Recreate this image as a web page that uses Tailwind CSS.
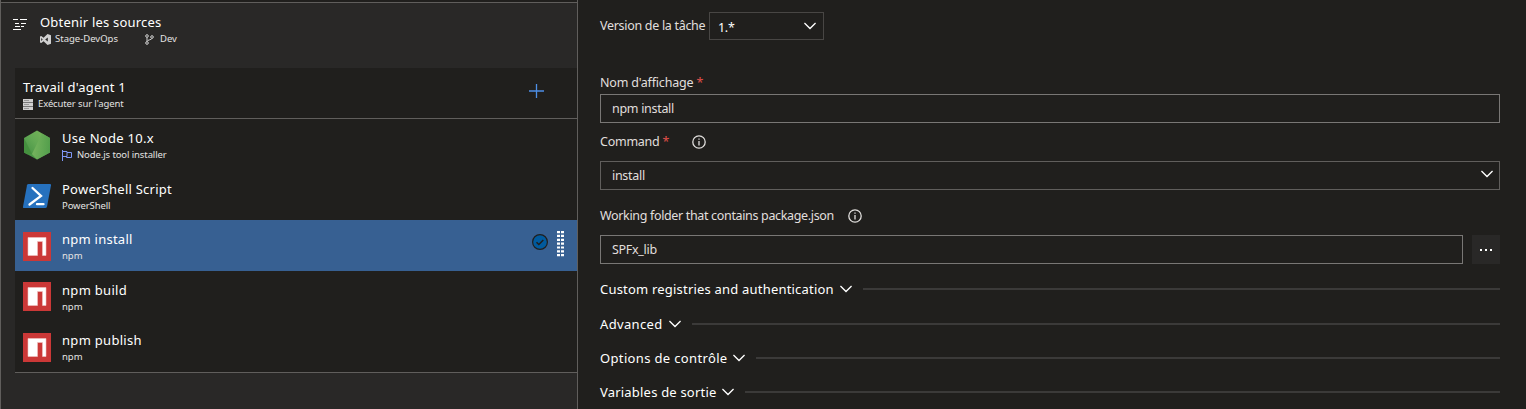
<!DOCTYPE html>
<html lang="fr">
<head>
<meta charset="utf-8">
<title>Pipeline</title>
<script src="https://cdn.jsdelivr.net/npm/@tailwindcss/browser@4"></script>
</head>
<body class="w-[1526px] h-[409px] overflow-hidden bg-[#201f1d] text-white font-['Noto_Sans','Open_Sans',sans-serif] text-[13px] leading-[18px] whitespace-nowrap">
<svg class="hidden">
  <symbol id="chev" viewBox="0 0 12 8"><path d="M.4 1 6 6.600 11.600 1" fill="none" stroke="currentColor" stroke-width="1.400"/></symbol>
  <symbol id="info" viewBox="0 0 14 14"><circle cx="7" cy="7" r="6.2" fill="none" stroke="currentColor" stroke-width="1.3"/><path d="M7 6v4.5M7 3.5v1.3" stroke="currentColor" stroke-width="1.3"/></symbol>
  <symbol id="npm" viewBox="0 0 28 29"><path fill="#cb3837" d="M0 0h28v29H0z"/><path fill="#fff" stroke="#f0c4c4" stroke-width=".6" d="M5 5.500h18v18h-3.500V9.500h-5v14H5z"/></symbol>
</svg>
<div class="flex h-full">
  <aside class="w-[578px] shrink-0 flex flex-col border-x border-[#605e5c] bg-[#292827]">
    <div class="h-[3px] shrink-0 bg-[#201f1d] border-b border-[#605e5c]"></div>
    <div class="h-[65px] shrink-0 flex pl-3 pt-[10px]">
      <svg class="w-[14px] h-[12px] mt-[6px] mr-[13px]" viewBox="0 0 14 12" stroke="#fff" stroke-width="1" fill="none"><path d="M0 .5h5M7 .5h7M2 4.500h4M8 4.500h5M2 7.500h5M8 7.500h3M0 10.500h8"/></svg>
      <div>
        <div class="tracking-[.2px]">Obtenir les sources</div>
        <div class="flex items-center h-[16px] text-[9.5px] leading-[16px] text-[#e4e3e2]">
          <svg class="w-[11px] h-[11px] mr-1" viewBox="0 0 11 11"><path fill="#d0d0d0" fill-rule="evenodd" d="M7.500 0 11 1.200v8.600L7.500 11 3.600 7.200 1.200 9 0 8.400V2.600L1.200 2l2.400 1.800zM7.800 3.400 5.200 5.500l2.600 2.100zM1.200 4v3l1.500-1.500z"/></svg>
          <span class="w-[90px]">Stage-DevOps</span>
          <svg class="w-[9px] h-[11px] mr-[6px]" viewBox="0 0 9 11" fill="none" stroke="#d0d0d0"><circle cx="2" cy="2" r="1.300"/><circle cx="2" cy="9" r="1.300"/><circle cx="7" cy="3" r="1.300"/><path d="M2 3.300v4.400M7 4.300C7 6 2.500 5.500 2 7.500"/></svg>
          <span>Dev</span>
        </div>
      </div>
    </div>
    <div class="ml-[14px] bg-[#201f1d] border-b border-[#605e5c] h-[305px] shrink-0">
      <div class="flex h-[51px] border-b border-[#605e5c] pl-2 pt-[10px]">
        <div class="w-[506px]">
          <div class="tracking-[.2px]">Travail d'agent 1</div>
          <div class="flex items-center h-[16px] text-[9.5px] leading-[16px] text-[#e4e3e2]">
            <svg class="w-[10px] h-[11px] mr-[5px]" viewBox="0 0 10 11"><path fill="#d0d0d0" d="M0 0h10v11H0z"/><path stroke="#777" d="M0 3.500h10M0 7.500h10"/><path stroke="#999" d="M1 1.500h5M1 5.500h5M1 9.500h5"/></svg>
            <span class="tracking-[-.12px]">Exécuter sur l'agent</span>
          </div>
        </div>
        <svg class="w-[15px] h-[15px] mt-[6px]" viewBox="0 0 15 15"><path d="M7.500 0v14M0 7h15" stroke="#4d8fe6" stroke-width="1.300"/></svg>
      </div>
      <div class="flex h-[51px] pl-2 pt-[10px]">
        <svg class="w-7 h-[30px] mt-[1px] mr-[11px]" viewBox="0 0 28 30"><defs><linearGradient id="g" x1="0" y1="1" x2="1" y2="0"><stop offset="0" stop-color="#3b8a3e"/><stop offset=".5" stop-color="#62a854"/><stop offset="1" stop-color="#7cb85b"/></linearGradient><linearGradient id="h" x1="0" y1="0" x2="1" y2="0"><stop offset="0" stop-color="#7fba62"/><stop offset="1" stop-color="#4c9a49"/></linearGradient></defs><path fill="url(#g)" d="M14 .5 27 8v14.500L14 29.500 1 22.500V8z"/><path fill="#45903f" d="m1 8 8 16-5 .2-3-1.700z"/><path fill="url(#h)" d="M19 3.500 27 8v14.500L14 29.500 9 24z" opacity=".8"/></svg>
        <div>
          <div class="tracking-[.3px]">Use Node 10.x</div>
          <div class="flex items-center h-[16px] text-[9.5px] leading-[16px] text-[#e4e3e2]">
            <svg class="w-[10px] h-[11px] mr-[5px]" viewBox="0 0 10 11" fill="none" stroke="#7f97f5"><path d="M.5 0v11M.5 1.500H5v5H.5M5 2.500h4.500v5H4.500V6"/></svg>
            <span class="tracking-[-.1px]">Node.js tool installer</span>
          </div>
        </div>
      </div>
      <div class="flex h-[50px] pl-2 pt-[10px]">
        <svg class="w-7 h-6 mt-[4px] mr-[11px]" viewBox="0 0 28 24"><path fill="#2671be" d="M5.500 0H27q1.200 0 1 1.200L24 22.500q-.3 1.500-1.800 1.500H1q-1.200 0-1-1.200L4 1.300Q4.300 0 5.500 0z"/><path d="m9.500 4 8.500 8L6.500 20.500M14 20.200h6.500" fill="none" stroke="#fff" stroke-width="2.300" stroke-linecap="round"/></svg>
        <div>
          <div class="tracking-[.25px]">PowerShell Script</div>
          <div class="h-[16px] text-[9.5px] leading-[16px] text-[#e4e3e2] tracking-[-.1px]">PowerShell</div>
        </div>
      </div>
      <div class="flex h-[51px] pl-2 pt-[10px] bg-[#376092]">
        <svg class="w-7 h-[29px] mt-[2px] mr-[11px]"><use href="#npm"/></svg>
        <div class="w-[470px]">
          <div class="tracking-[.25px]">npm install</div>
          <div class="h-[16px] text-[9.5px] leading-[16px] text-[#e4e3e2]">npm</div>
        </div>
        <svg class="w-4 h-4 mt-[4px] mr-[9px]" viewBox="0 0 16 16"><circle cx="8" cy="8" r="7.400" fill="#005a9e" stroke="#201f1e" stroke-width="1.200"/><path d="m4.500 8.200 2.300 2.300 4.500-4.600" fill="none" stroke="#201f1e" stroke-width="1.500"/></svg>
        <svg class="w-[7px] h-[27px] mt-[1px]" viewBox="0 0 7 27" fill="none" stroke="#fff" stroke-width="3"><path d="M1.500 0v27M5.500 0v27" stroke-dasharray="2.200 1.650"/></svg>
      </div>
      <div class="flex h-[51px] pl-2 pt-[10px]">
        <svg class="w-7 h-[29px] mt-[1px] mr-[11px]"><use href="#npm"/></svg>
        <div>
          <div class="tracking-[.3px]">npm build</div>
          <div class="h-[16px] text-[9.5px] leading-[16px] text-[#e4e3e2]">npm</div>
        </div>
      </div>
      <div class="flex h-[50px] pl-2 pt-[9px]">
        <svg class="w-7 h-[29px] mt-[2px] mr-[11px]"><use href="#npm"/></svg>
        <div>
          <div class="tracking-[.3px]">npm publish</div>
          <div class="h-[16px] text-[9.5px] leading-[16px] text-[#e4e3e2]">npm</div>
        </div>
      </div>
    </div>
  </aside>
  <main class="w-[922px] ml-[22px] pr-[22px] pt-3 text-[12.5px] tracking-[-.3px] text-[#e1dfdd]">
    <div class="flex h-7">
      <span class="w-[109px] mt-[5px]">Version de la tâche</span>
      <div class="w-[115px] border border-[#484644] flex justify-between items-center pl-2 pr-[7px] text-white"><span class="mt-[3px]">1.*</span><svg class="w-3 h-2"><use href="#chev"/></svg></div>
    </div>
    <div class="mt-[34px] h-[18px] tracking-[-.2px]">Nom d'affichage <span class="text-[#e0504a]">*</span></div>
    <div class="mt-[2px] h-[29px] border border-[#797775] flex items-center pl-[11px] pt-px">npm install</div>
    <div class="mt-[10px] h-[18px] flex items-center"><span class="w-[92px] tracking-[-.25px]">Command <span class="text-[#e0504a]">*</span></span><svg class="w-[14px] h-[14px]"><use href="#info"/></svg></div>
    <div class="mt-[10px] h-[29px] border border-[#605e5c] flex items-center justify-between pl-[11px] pr-[6px] pt-px">install<svg class="w-3 h-2 mb-1 text-white"><use href="#chev"/></svg></div>
    <div class="mt-[17px] h-[18px] flex items-center"><span class="w-[248px] tracking-[-.34px]">Working folder that contains package.json</span><svg class="w-[14px] h-[14px]"><use href="#info"/></svg></div>
    <div class="mt-[10px] h-[29px] flex">
      <div class="w-[863px] mr-[9px] border border-[#797775] flex items-center pl-[11px]">SPFx_lib</div>
      <div class="w-7 bg-[#292827] flex items-center justify-center gap-[3px]"><i class="w-[2px] h-[2px] bg-white"></i><i class="w-[2px] h-[2px] bg-white"></i><i class="w-[2px] h-[2px] bg-white"></i></div>
    </div>
    <div class="mt-[16px] h-[18px] flex items-center text-[13px] text-white"><span class="w-[240px] tracking-[.2px]">Custom registries and authentication</span><svg class="w-3 h-2 mr-[11px]"><use href="#chev"/></svg><div class="h-[2px] flex-1 bg-[#3b3a39]"></div></div>
    <div class="mt-[17px] h-[18px] flex items-center text-[13px] text-white"><span class="w-[69px] tracking-[.35px]">Advanced</span><svg class="w-3 h-2 mr-[11px]"><use href="#chev"/></svg><div class="h-[2px] flex-1 bg-[#3b3a39]"></div></div>
    <div class="mt-4 h-[18px] flex items-center text-[13px] text-white"><span class="w-[133px] tracking-[.35px]">Options de contrôle</span><svg class="w-3 h-2 mr-[11px]"><use href="#chev"/></svg><div class="h-[2px] flex-1 bg-[#3b3a39]"></div></div>
    <div class="mt-4 h-[18px] flex items-center text-[13px] text-white"><span class="w-[122px] tracking-[.2px]">Variables de sortie</span><svg class="w-3 h-2 mr-[11px]"><use href="#chev"/></svg><div class="h-[2px] flex-1 bg-[#3b3a39]"></div></div>
  </main>
</div>
</body>
</html>
